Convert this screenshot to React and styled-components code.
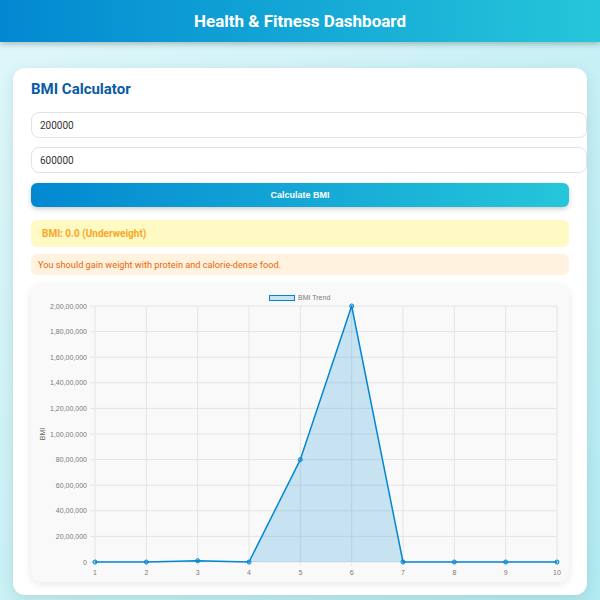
import React from "react";
import styled, { createGlobalStyle } from "styled-components";

const GlobalStyle = createGlobalStyle`
  html, body {
    margin: 0;
    padding: 0;
  }
  body {
    font-family: Roboto, "Noto Sans", sans-serif;
    background: linear-gradient(135deg, #e0f7fa 0%, #b2ebf2 100%);
    min-height: 600px;
  }
`;

const Header = styled.header`
  height: 42px;
  display: flex;
  align-items: center;
  justify-content: center;
  background: linear-gradient(90deg, #0288d1 0%, #26c6da 100%);
  box-shadow: 0 2px 6px rgba(0, 0, 0, 0.25);
  color: #fff;
  font-family: Roboto, "Liberation Sans", sans-serif;
  font-weight: 700;
  font-size: 17px;
`;

const Page = styled.main`
  padding: 26px 13px 4px;
`;

const Card = styled.section`
  background: #fff;
  border-radius: 12px;
  box-shadow: 0 4px 15px rgba(0, 0, 0, 0.1);
  padding: 12px 18px 13px;
`;

const Title = styled.h2`
  margin: 0 0 14px;
  font-size: 15px;
  line-height: 18px;
  font-weight: 700;
  color: #0b5aa5;
`;

const Input = styled.input`
  display: block;
  width: 100%;
  box-sizing: content-box;
  height: 24px;
  padding: 0 8px;
  margin: 0 0 9px;
  border: 1px solid #e3e3e3;
  border-radius: 8px;
  font-family: Roboto, sans-serif;
  font-size: 10px;
  color: #333;
  outline: none;
`;

const Button = styled.button`
  display: block;
  width: 100%;
  height: 24px;
  margin-top: 10px;
  border: none;
  border-radius: 6px;
  background: linear-gradient(90deg, #0288d1 0%, #26c6da 100%);
  box-shadow: 0 2px 5px rgba(0, 0, 0, 0.2);
  color: #fff;
  font-family: "Liberation Sans", Arial, sans-serif;
  font-weight: 700;
  font-size: 9px;
  cursor: pointer;
`;

const Result = styled.div`
  margin-top: 13px;
  padding: 8px 11px;
  border-radius: 6px;
  background: #fff9c4;
  color: #f9a825;
  font-weight: 700;
  font-size: 10px;
  line-height: 11px;
`;

const Advice = styled.div`
  margin-top: 7px;
  padding: 5px 7px;
  border-radius: 6px;
  background: #fff3e0;
  color: #e9650a;
  font-size: 9.2px;
  line-height: 11px;
`;

const ChartBox = styled.div`
  margin-top: 10px;
  height: 297px;
  border-radius: 10px;
  background: #f9f9f9;
  box-shadow: 0 2px 8px rgba(0, 0, 0, 0.1);
  svg {
    display: block;
    font-family: "Liberation Sans", Arial, sans-serif;
  }
`;

const data = [0, 0, 100000, 0, 8000000, 20000000, 0, 0, 0, 0];
const area = { left: 64, right: 526, top: 21, bottom: 277 };
const yMax = 20000000;

const xAt = i => area.left + (i * (area.right - area.left)) / (data.length - 1);
const yAt = v => area.bottom - (v / yMax) * (area.bottom - area.top);

const fmt = v => v.toLocaleString("en-IN");

const BmiChart = () => {
  const ticks = [];
  for (let v = 0; v <= yMax; v += 2000000) ticks.push(v);
  const line = data.map((v, i) => `${xAt(i)},${yAt(v)}`).join(" ");
  const fill = `${xAt(0)},${area.bottom} ${line} ${xAt(data.length - 1)},${area.bottom}`;

  return (
    <svg width="538" height="297" viewBox="0 0 538 297">
      {ticks.map(v => (
        <g key={v}>
          <line x1={area.left - 5} x2={area.right} y1={yAt(v)} y2={yAt(v)} stroke="#e4e4e4" strokeWidth="1" />
          <text x={area.left - 8} y={yAt(v) + 2.5} fontSize="7" fill="#7a7a7a" textAnchor="end">
            {fmt(v)}
          </text>
        </g>
      ))}
      {data.map((v, i) => (
        <g key={i}>
          <line x1={xAt(i)} x2={xAt(i)} y1={area.top} y2={area.bottom + 4} stroke="#e4e4e4" strokeWidth="1" />
          <text x={xAt(i)} y={area.bottom + 13} fontSize="7" fill="#7a7a7a" textAnchor="middle">
            {i + 1}
          </text>
        </g>
      ))}
      <text x="14" y="149" fontSize="7" fill="#666" textAnchor="middle" transform="rotate(-90 14 149)">
        BMI
      </text>

      <rect x="238.5" y="10.5" width="25" height="5" fill="rgba(2,136,209,0.2)" stroke="#0288d1" strokeWidth="1" />
      <text x="267" y="15" fontSize="7" fill="#7a7a7a">BMI Trend</text>

      <polygon points={fill} fill="rgba(2,136,209,0.2)" />
      <polyline points={line} fill="none" stroke="#0288d1" strokeWidth="1.5" strokeLinejoin="round" />
      {data.map((v, i) => (
        <circle key={i} cx={xAt(i)} cy={yAt(v)} r="2" fill="rgba(2,136,209,0.3)" stroke="#0288d1" strokeWidth="1" />
      ))}
    </svg>
  );
};

export default function App() {
  return (
    <>
      <GlobalStyle />
      <Header>Health &amp; Fitness Dashboard</Header>
      <Page>
        <Card>
          <Title>BMI Calculator</Title>
          <Input type="number" defaultValue="200000" />
          <Input type="number" defaultValue="600000" />
          <Button>Calculate BMI</Button>
          <Result>BMI: 0.0 (Underweight)</Result>
          <Advice>You should gain weight with protein and calorie-dense food.</Advice>
          <ChartBox>
            <BmiChart />
          </ChartBox>
        </Card>
      </Page>
    </>
  );
}
